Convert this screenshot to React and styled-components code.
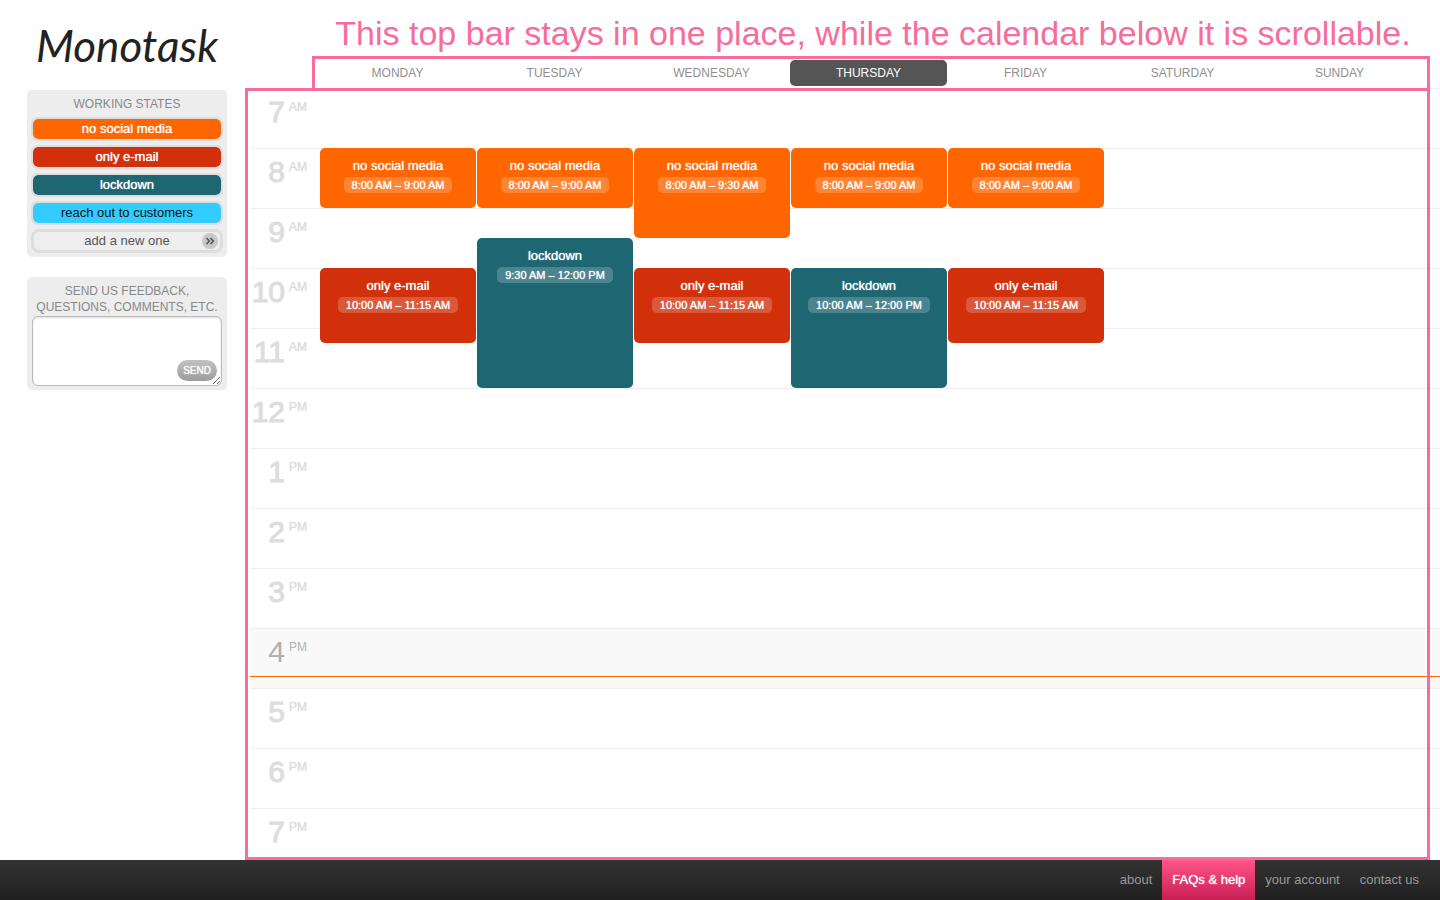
import React from "react";
import styled, { createGlobalStyle } from "styled-components";

const PINK = "#f76c9b";
const ORANGE = "#ff6600";
const RED = "#d2300b";
const TEAL = "#1f6673";
const BLUE = "#33ccff";

const GlobalStyle = createGlobalStyle`
  * { box-sizing: border-box; }
  body {
    margin: 0;
    background: #fff;
    color: #555;
    font-family: "Liberation Sans", Arial, Helvetica, sans-serif;
    font-size: 13px;
    line-height: 16px;
  }
  button, textarea { font: inherit; }
`;

const Page = styled.div`
  display: flex;
  flex-direction: column;
  height: 100vh;
`;

const Main = styled.main`
  display: flex;
  flex: 1;
  min-height: 0;
`;

const Sidebar = styled.aside`
  flex: none;
  width: 245px;
  padding: 0 18px 0 27px;
`;

const Logo = styled.h1`
  display: flex;
  align-items: center;
  justify-content: center;
  height: 90px;
  margin: 0;
  color: #222;
  font-family: Lato, "Liberation Sans", sans-serif;
  font-size: 44px;
  font-style: italic;
  font-weight: 400;
  line-height: 52px;
`;

const Panel = styled.section`
  margin-bottom: 20px;
  padding: ${(p) => (p.$form ? "6px 5px 4px" : "0 4px 4px")};
  border-radius: 5px;
  background: #ededed;
`;

const PanelTitle = styled.h2`
  margin: 0;
  padding: 6px 0 5px;
  color: #888;
  font-size: 12px;
  font-weight: 400;
  line-height: 16px;
  text-align: center;
`;

const FeedbackLabel = styled.label`
  display: block;
  padding-bottom: 1px;
  color: #888;
  font-size: 12px;
  line-height: 16px;
  text-align: center;
`;

const StateList = styled.div`
  display: flex;
  flex-direction: column;
  gap: 4px;
`;

const StateButton = styled.button`
  height: 24px;
  padding: 0;
  border: 2px solid #ddd;
  border-radius: 7px;
  background: ${(p) => p.$color};
  background-clip: padding-box;
  color: ${(p) => (p.$dark ? "#111" : "#fff")};
  text-shadow: ${(p) => (p.$dark ? "none" : "0 0 1px #fff")};
  line-height: 16px;
  cursor: pointer;
`;

const AddButton = styled.button`
  display: grid;
  grid-template-columns: 16px 1fr 16px;
  align-items: center;
  height: 24px;
  padding: 0 2px;
  border: 3px solid #ddd;
  border-radius: 8px;
  background: #eee;
  color: #555;
  cursor: pointer;
`;

const AddLabel = styled.span`
  grid-column: 2;
`;

const FeedbackBox = styled.div`
  position: relative;
`;

const FeedbackInput = styled.textarea`
  display: block;
  width: 100%;
  height: 70px;
  padding: 5px;
  border: 1px solid #bbb;
  border-radius: 6px;
  background: #fff;
  box-shadow: inset 0 1px 2px #ddd;
  resize: both;
`;

const SendButton = styled.button`
  position: absolute;
  right: 5px;
  bottom: 5px;
  height: 21px;
  padding: 0 6px;
  border: 0;
  border-radius: 11px;
  background: linear-gradient(#c2c2c2, #9c9c9c);
  color: #fff;
  font-size: 10px;
  text-shadow: 0 0 1px #fff;
  cursor: pointer;
`;

const Calendar = styled.section`
  display: flex;
  flex: 1;
  flex-direction: column;
  min-width: 0;
`;

const Note = styled.p`
  height: 56px;
  margin: 0;
  padding: 11px 8px 0 69px;
  color: ${PINK};
  font-size: 34px;
  line-height: 44px;
  text-align: center;
  white-space: nowrap;
`;

const Frame = styled.div`
  position: absolute;
  inset: ${(p) => p.$inset};
  z-index: 2;
  border: 3px solid ${PINK};
  pointer-events: none;
`;

const Days = styled.header`
  position: relative;
  display: grid;
  flex: none;
  grid-template-columns: repeat(7, 1fr);
  height: 32px;
  padding: 4px 22px 2px 74px;
`;

const Day = styled.div`
  border-radius: 5px;
  background: ${(p) => (p.$today ? "#555" : "transparent")};
  color: ${(p) => (p.$today ? "#fff" : "#909090")};
  font-size: 12px;
  line-height: 26px;
  text-align: center;
`;

const Schedule = styled.div`
  position: relative;
  flex: 1;
  min-height: 0;
`;

const Scroller = styled.div`
  height: 100%;
  padding-left: 5px;
  overflow-y: auto;
  scrollbar-width: none;
`;

const HourGrid = styled.div`
  position: relative;
  display: grid;
  grid-template-columns: 70px repeat(7, 1fr) 21px;
  grid-template-rows: repeat(52, 15px);
`;

const Hour = styled.div`
  display: grid;
  grid-row: ${(p) => p.$row} / span 4;
  grid-column: 1 / -1;
  grid-template-columns: 35px 1fr;
  gap: 4px;
  border-top: 1px solid #eee;
  background: ${(p) => (p.$now ? "#f9f9f9" : "transparent")};
  color: ${(p) => (p.$now ? "#b0b0b0" : "#ddd")};
`;

const HourNumber = styled.span`
  padding-top: 6px;
  font-size: 30px;
  line-height: 34px;
  text-align: right;
  -webkit-text-stroke: ${(p) => (p.$now ? "0" : "1px #ddd")};
`;

const Meridiem = styled.span`
  padding-top: 10px;
  font-size: 12px;
  line-height: 16px;
  text-shadow: ${(p) => (p.$now ? "none" : "0 0 1px #ddd")};
`;

const Event = styled.article`
  z-index: 1;
  display: flex;
  flex-direction: column;
  align-items: center;
  gap: 3px;
  grid-column: ${(p) => p.$day + 1};
  grid-row: ${(p) => p.$start} / span ${(p) => p.$span};
  margin-right: 1px;
  padding-top: 10px;
  border-radius: 5px;
  background: ${(p) => p.$color};
  color: #fff;
  text-shadow: 0 0 1px #fff;
`;

const EventTime = styled.time`
  padding: 0 8px;
  border-radius: 5px;
  background: rgba(255, 255, 255, 0.2);
  font-size: 11px;
  line-height: 16px;
  white-space: nowrap;
`;

const NowLine = styled.div`
  position: absolute;
  right: 0;
  left: 0;
  height: 1px;
  background: ${ORANGE};
`;

const Footer = styled.footer`
  display: flex;
  flex: none;
  justify-content: flex-end;
  height: 40px;
  padding-right: 11px;
  background: linear-gradient(#333, #202020);
`;

const FooterLink = styled.a`
  padding: 0 10px;
  background: ${(p) => (p.$active ? "linear-gradient(#ff5588, #c81e54)" : "none")};
  color: ${(p) => (p.$active ? "#fff" : "#999")};
  line-height: 40px;
  text-decoration: none;
  text-shadow: ${(p) => (p.$active ? "0 0 1px #fff" : "none")};
`;

const states = [
  { name: "no social media", color: ORANGE },
  { name: "only e-mail", color: RED },
  { name: "lockdown", color: TEAL },
  { name: "reach out to customers", color: BLUE, dark: true },
];

const days = ["MONDAY", "TUESDAY", "WEDNESDAY", "THURSDAY", "FRIDAY", "SATURDAY", "SUNDAY"];
const hours = [7, 8, 9, 10, 11, 12, 1, 2, 3, 4, 5, 6, 7];
const FIRST_HOUR = 7;
const NOW = 16.8;

const social = { name: "no social media", color: ORANGE, from: 8, to: 9, time: "8:00 AM – 9:00 AM" };
const email = { name: "only e-mail", color: RED, from: 10, to: 11.25, time: "10:00 AM – 11:15 AM" };
const lockdown = { name: "lockdown", color: TEAL, from: 10, to: 12, time: "10:00 AM – 12:00 PM" };

const events = [
  { ...social, day: 1 },
  { ...email, day: 1 },
  { ...social, day: 2 },
  { ...lockdown, day: 2, from: 9.5, time: "9:30 AM – 12:00 PM" },
  { ...social, day: 3, to: 9.5, time: "8:00 AM – 9:30 AM" },
  { ...email, day: 3 },
  { ...social, day: 4 },
  { ...lockdown, day: 4 },
  { ...social, day: 5 },
  { ...email, day: 5 },
];

const links = ["about", "FAQs & help", "your account", "contact us"];

function ChevronBadge() {
  return (
    <svg width="16" height="16" viewBox="0 0 16 16" aria-hidden="true">
      <circle cx="8" cy="8" r="8" fill="#c8c8c8" />
      <path d="M4.5 5 7.2 8l-2.7 3M8.5 5l2.7 3-2.7 3" fill="none" stroke="#555" strokeWidth="1.7" />
    </svg>
  );
}

export default function App() {
  return (
    <Page>
      <GlobalStyle />
      <Main>
        <Sidebar>
          <Logo>Monotask</Logo>
          <Panel>
            <PanelTitle>WORKING STATES</PanelTitle>
            <StateList>
              {states.map((s) => (
                <StateButton key={s.name} type="button" $color={s.color} $dark={s.dark}>
                  {s.name}
                </StateButton>
              ))}
              <AddButton type="button">
                <AddLabel>add a new one</AddLabel>
                <ChevronBadge />
              </AddButton>
            </StateList>
          </Panel>
          <Panel as="form" $form>
            <FeedbackLabel htmlFor="feedback">
              SEND US FEEDBACK,
              <br />
              QUESTIONS, COMMENTS, ETC.
            </FeedbackLabel>
            <FeedbackBox>
              <FeedbackInput id="feedback" />
              <SendButton type="button">SEND</SendButton>
            </FeedbackBox>
          </Panel>
        </Sidebar>
        <Calendar>
          <Note>This top bar stays in one place, while the calendar below it is scrollable.</Note>
          <Days>
            {days.map((d) => (
              <Day key={d} $today={d === "THURSDAY"}>
                {d}
              </Day>
            ))}
            <Frame $inset="0 10px -3px 67px" />
          </Days>
          <Schedule>
            <Scroller>
              <HourGrid>
                {hours.map((h, i) => {
                  const now = i + FIRST_HOUR === Math.floor(NOW);
                  return (
                    <Hour key={i} $row={i * 4 + 1} $now={now}>
                      <HourNumber $now={now}>{h}</HourNumber>
                      <Meridiem $now={now}>{i < 5 ? "AM" : "PM"}</Meridiem>
                    </Hour>
                  );
                })}
                {events.map((e) => (
                  <Event
                    key={`${e.day}-${e.from}`}
                    $day={e.day}
                    $start={(e.from - FIRST_HOUR) * 4 + 1}
                    $span={(e.to - e.from) * 4}
                    $color={e.color}
                  >
                    <span>{e.name}</span>
                    <EventTime>{e.time}</EventTime>
                  </Event>
                ))}
                <NowLine style={{ top: `${((NOW - FIRST_HOUR) / hours.length) * 100}%` }} />
              </HourGrid>
            </Scroller>
            <Frame $inset="0 10px 0 0" />
          </Schedule>
        </Calendar>
      </Main>
      <Footer>
        {links.map((l) => (
          <FooterLink key={l} href="#" $active={l === "FAQs & help"}>
            {l}
          </FooterLink>
        ))}
      </Footer>
    </Page>
  );
}
